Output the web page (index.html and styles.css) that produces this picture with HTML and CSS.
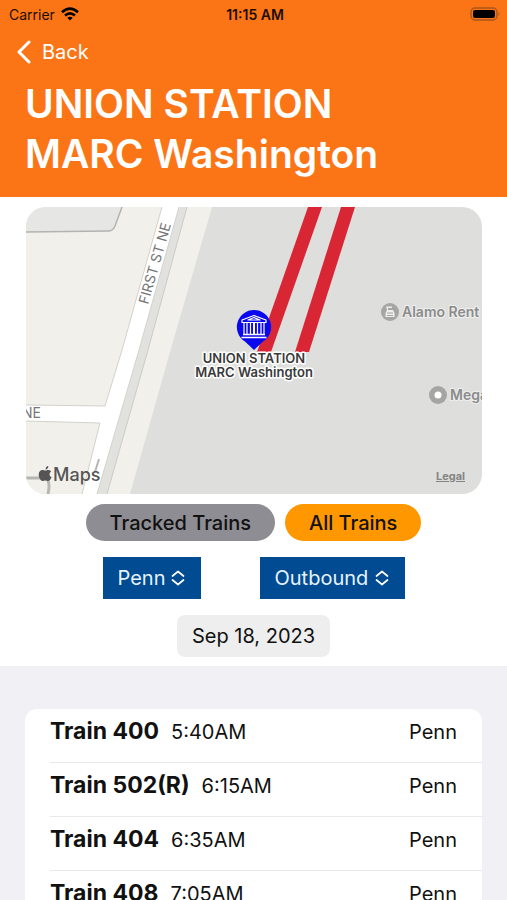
FILE: index.html
```html
<!DOCTYPE html>
<html lang="en">
<head>
  <meta charset="UTF-8">
  <meta name="viewport" content="width=device-width, initial-scale=1.0">
  <title>Union Station</title>
  <link rel="stylesheet" href="styles.css">
</head>
<body>
  <header class="header">
    <div class="status-bar">
      <div class="carrier">
        Carrier
        <svg width="18" height="14" viewBox="0 0 18 14" fill="none" stroke="#000" stroke-width="2.6">
          <path d="M1 5.2Q9-2 17 5.2"/>
          <path d="M4 8.5Q9 4.2 14 8.5"/>
          <path d="M9 13.4L6.3 10.7Q9 8.6 11.7 10.7Z" fill="#000" stroke="none"/>
        </svg>
      </div>
      <div class="clock">11:15 AM</div>
      <div class="battery">
        <svg width="31" height="14" viewBox="0 0 31 14">
          <rect x="1" y="1" width="26" height="12" rx="4" fill="none" stroke="#a9561c" stroke-width="1.4"/>
          <rect x="3" y="3" width="22" height="8" rx="2" fill="#000"/>
          <path d="M28.5 5Q30.5 7 28.5 9Z" fill="#a9561c"/>
        </svg>
      </div>
    </div>
    <button class="back">
      <svg width="14" height="24" viewBox="0 0 14 24" fill="none" stroke="#fff" stroke-width="3" stroke-linecap="round" stroke-linejoin="round">
        <path d="M12 2L2 12L12 22"/>
      </svg>
      Back
    </button>
    <h1>UNION STATION<br>MARC Washington</h1>
  </header>

  <main class="station">
    <div class="map">
      <svg class="map-canvas" viewBox="0 0 456 287" preserveAspectRatio="xMidYMid slice">
        <rect width="456" height="287" fill="#dededc"/>
        <!-- blocks -->
        <path d="M0 0H186L144 145L104 287H0Z" fill="#f2f0ea"/>
        <path d="M0 0H96L89 19Q87 24 82 24L0 25Z" fill="#e6e6e5"/>
        <path d="M96 0L89 19Q87 24 82 24L0 25" fill="none" stroke="#b3b3b1" stroke-width="1.5"/>
        <path d="M153 0H161L122 143L81 287H71L113 143Z" fill="#e1e1de"/>
        <path d="M161 0L122 143L81 287" fill="none" stroke="#cbcbc8" stroke-width="1"/>
        <!-- streets -->
        <path d="M136 0H153L113 143L71 287H56L74 216L0 214V198L79 199L96 143Z" fill="#fff"/>
        <path d="M136 0L96 143L79 199L0 198M0 214L74 216L56 287M153 0L113 143L71 287" fill="none" stroke="#d2d1cc" stroke-width="1"/>
        <path d="M0 271H19Q25 273 22 287" fill="none" stroke="#b5b5b3" stroke-width="3"/>
        <path d="M73 252L69 265" stroke="#b5b5b3" stroke-width="2"/>
        <text class="street" transform="translate(122 98) rotate(-74)">FIRST ST NE</text>
        <text class="street" x="-4" y="211">NE</text>
        <!-- tracks -->
        <path d="M282 0H296L245 145H231Z" fill="#d92635"/>
        <path d="M315 0H329L283 145H269Z" fill="#d92635"/>
        <!-- places -->
        <circle cx="364" cy="105" r="9" fill="#a5a5a4"/>
        <path d="M360 99.500h6v1.500h-4v2h5l1.500 3v4h-9v-4l1.500-3z" fill="#eee"/>
        <path d="M361 106h6M361 108.500h6" stroke="#a5a5a4" stroke-width="1"/>
        <text class="place" x="376" y="110">Alamo Rent</text>
        <circle cx="412" cy="188" r="9" fill="#a5a5a4"/>
        <circle cx="412" cy="188" r="3.500" fill="#fff"/>
        <text class="place" x="424" y="193">Mega</text>
        <!-- station pin -->
        <path d="M228 103a17 17 0 0 1 9 31.500L228 143L219 134.500A17 17 0 0 1 228 103Z" fill="#0a08ee"/>
        <g fill="none" stroke="#fff" stroke-width="1.200" stroke-linejoin="round">
          <path d="M216 113L228 108.500L240 113V115.500H216Z"/>
          <path d="M222 113L228 110.500L234 113Z"/>
          <path d="M218 115.500V127.500M221 115.500V127.500M224.500 115.500V127.500M231.500 115.500V127.500M235 115.500V127.500M238 115.500V127.500"/>
          <path d="M228 115.500V127.500" stroke-width="2"/>
          <path d="M217 127.500H239M215.500 130.500H240.500" stroke-width="1.600"/>
        </g>
        <text class="pin-label"><tspan x="228" y="156">UNION STATION</tspan><tspan x="228" y="170">MARC Washington</tspan></text>
        <!-- attribution -->
        <path d="M19.500 262.500C19.500 260.500 20.800 259.200 22.300 259C22.400 261 21.200 262.400 19.500 262.500ZM19.300 263.600C20.200 263.600 21 262.900 22.300 262.900C23.500 262.900 24.600 263.500 25.200 264.400C22.800 265.900 23.100 269 25.600 270.100C24.900 271.900 23.800 274 22.300 274C21.200 274 20.800 273.400 19.500 273.400C18.200 273.400 17.700 274 16.700 274C14.600 274 12.700 270.300 12.700 267.500C12.700 264.600 14.500 263 16.400 263C17.600 263 18.500 263.600 19.300 263.600Z" fill="#555"/>
        <text class="maps-logo" x="27" y="274">Maps</text>
      </svg>
      <a class="legal" href="#">Legal</a>
    </div>

    <div class="filters">
      <button class="pill">Tracked Trains</button>
      <button class="pill active">All Trains</button>
    </div>

    <div class="pickers">
      <div class="picker line">
        <select aria-label="Line">
          <option>Penn</option>
        </select>
        <svg width="14" height="16" viewBox="0 0 14 16" fill="none" stroke="#fff" stroke-width="1.700" stroke-linecap="round" stroke-linejoin="round">
          <path d="M1.500 6L7 1.500L12.500 6M1.500 10L7 14.500L12.500 10"/>
        </svg>
      </div>
      <div class="picker direction">
        <select aria-label="Direction">
          <option>Outbound</option>
        </select>
        <svg width="14" height="16" viewBox="0 0 14 16" fill="none" stroke="#fff" stroke-width="1.700" stroke-linecap="round" stroke-linejoin="round">
          <path d="M1.500 6L7 1.500L12.500 6M1.500 10L7 14.500L12.500 10"/>
        </svg>
      </div>
    </div>

    <button class="date">Sep 18, 2023</button>
  </main>

  <section class="schedule">
    <ul class="trains">
      <li><strong>Train 400</strong><span>5:40AM</span><span class="route">Penn</span></li>
      <li><strong>Train 502(R)</strong><span>6:15AM</span><span class="route">Penn</span></li>
      <li><strong>Train 404</strong><span>6:35AM</span><span class="route">Penn</span></li>
      <li><strong>Train 408</strong><span>7:05AM</span><span class="route">Penn</span></li>
    </ul>
  </section>
</body>
</html>
```
FILE: styles.css
```css
* {
  box-sizing: border-box;
}
body {
  display: flex;
  flex-direction: column;
  height: 100vh;
  margin: 0;
  overflow: hidden;
  font-family: Inter, "Liberation Sans", sans-serif;
  font-size: 20px;
  color: #111;
  background-color: #fff;
}
button, select {
  font: inherit;
  border: 0;
  margin: 0;
}
svg {
  display: block;
}

/* Header */
.header {
  padding-bottom: 18px;
  color: #fff;
  background-color: #fb7516;
}
.status-bar {
  display: grid;
  grid-template-columns: 1fr auto 1fr;
  align-items: center;
  height: 28px;
  padding: 0 6px 0 9px;
  font-size: 14px;
  color: #1c0d03;
}
.carrier {
  display: flex;
  align-items: center;
  gap: 6px;
}
.clock {
  font-weight: 600;
}
.battery {
  justify-self: end;
}
.back {
  display: flex;
  align-items: center;
  gap: 11px;
  height: 48px;
  padding: 0 17px;
  color: #fff;
  background: none;
}
h1 {
  margin: 0;
  padding: 3px 25px 0;
  font-size: 39px;
  font-weight: 600;
  line-height: 50px;
}

/* Map */
.station {
  display: flex;
  flex-direction: column;
  align-items: center;
  gap: 16px;
  padding: 10px 25px 9px;
}
.map {
  position: relative;
  align-self: stretch;
  margin: 0 0 -6px 1px;
  border-radius: 20px;
  overflow: hidden;
}
.map-canvas {
  width: 100%;
}
.street {
  font-size: 14px;
  fill: #777;
}
.place {
  font-size: 14px;
  font-weight: 600;
  fill: #8b8b8b;
  stroke: #eee;
  stroke-width: 2px;
  paint-order: stroke;
}
.pin-label {
  font-size: 13px;
  font-weight: 600;
  text-anchor: middle;
  fill: #3a3a3a;
  stroke: #fff;
  stroke-width: 3px;
  stroke-linejoin: round;
  paint-order: stroke;
}
.maps-logo {
  font-size: 18px;
  font-weight: 500;
  fill: #555;
}
.legal {
  position: absolute;
  right: 17px;
  bottom: 11px;
  font-size: 11px;
  font-weight: 700;
  color: #858585;
}

/* Controls */
.filters {
  display: flex;
  gap: 10px;
}
.pill {
  height: 37px;
  padding: 0 24px;
  border-radius: 19px;
  font-weight: 500;
  color: #111;
  background-color: #8e8d93;
}
.pill.active {
  background-color: #ff9800;
}
.pickers {
  display: flex;
  gap: 59px;
}
.picker {
  display: grid;
  align-items: center;
  height: 42px;
  background-color: #004b91;
}
.picker select, .picker svg {
  grid-area: 1 / 1;
}
.picker select {
  width: 100%;
  height: 100%;
  padding: 0 15px;
  color: #e8f3ff;
  background: none;
  appearance: none;
}
.picker svg {
  justify-self: end;
  margin-right: 16px;
  pointer-events: none;
}
.line {
  width: 98px;
}
.direction {
  width: 145px;
}
.date {
  height: 42px;
  padding: 0 15px;
  border-radius: 8px;
  color: #111;
  background-color: #eee;
}

/* Train list */
.schedule {
  flex: 1;
  padding: 43px 25px 0;
  background-color: #f0f0f5;
}
.trains {
  margin: 0;
  padding: 0 0 0 25px;
  list-style: none;
  border-radius: 12px;
  background-color: #fff;
}
.trains li {
  display: flex;
  align-items: baseline;
  gap: 12px;
  height: 54px;
  padding: 7px 25px 0 0;
  line-height: 30px;
  border-bottom: 1px solid #e8e8ea;
}
.trains strong {
  font-size: 23px;
  font-weight: 700;
}
.route {
  margin-left: auto;
}
```
